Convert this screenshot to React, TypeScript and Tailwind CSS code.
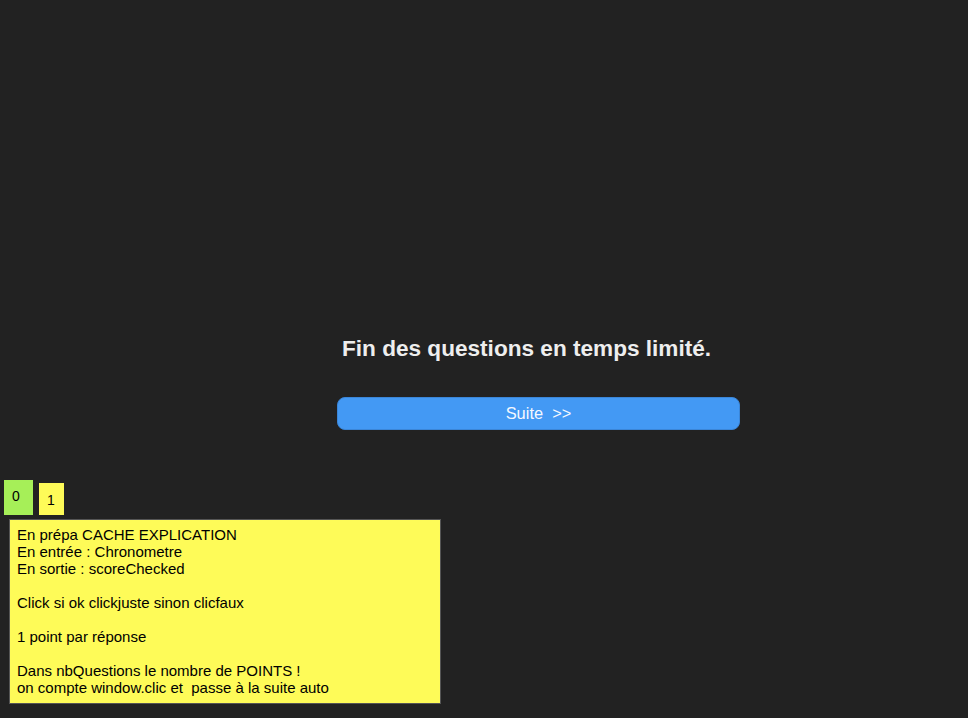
import React from 'react'

export default function App() {
    const lines = [
        "En prépa CACHE EXPLICATION",
        "En entrée : Chronometre",
        "En sortie : scoreChecked",
        "",
        "Click si ok clickjuste sinon clicfaux",
        "",
        "1 point par réponse",
        "",
        "Dans nbQuestions le nombre de POINTS !",
        "on compte window.clic et  passe à la suite auto",
    ]
    return (
        <div className="w-[968px] h-[718px] bg-[#222222] overflow-hidden flex flex-col" style={{ fontFamily: '"Liberation Sans", Arial, sans-serif' }}>
            <div className="ml-[337px] w-[403px] pt-[336px]">
                <h1 className="pl-[5px] text-[22.6px] leading-[26px] font-bold text-[#eeeeee]">
                    Fin des questions en temps limité.
                </h1>
                <button className="mt-[35px] w-[403px] h-[33px] rounded-[8px] bg-[#4399f4] border border-[#3b86d8] text-[#f4f8ff] text-[16.4px] whitespace-pre">
                    {"Suite  >>"}
                </button>
            </div>
            <div className="mt-[50px] pl-[4px] flex items-end gap-[6px]">
                <div className="w-[29px] h-[35px] bg-[#a6ef58] text-black text-[14px] pl-[8px] pt-[6px]">0</div>
                <div className="w-[25px] h-[32px] bg-[#fefb58] text-black text-[14px] pl-[8px] pt-[7px]">1</div>
            </div>
            <div className="ml-[9px] mt-[4px] w-[432px] h-[185px] bg-[#fefb58] border border-[#555555] pl-[7px] pt-[6px] text-[15px] leading-[17px] text-black">
                {lines.map((l, i) => (
                    <div key={i} className="h-[17px] whitespace-pre">{l}</div>
                ))}
            </div>
        </div>
    )
}
